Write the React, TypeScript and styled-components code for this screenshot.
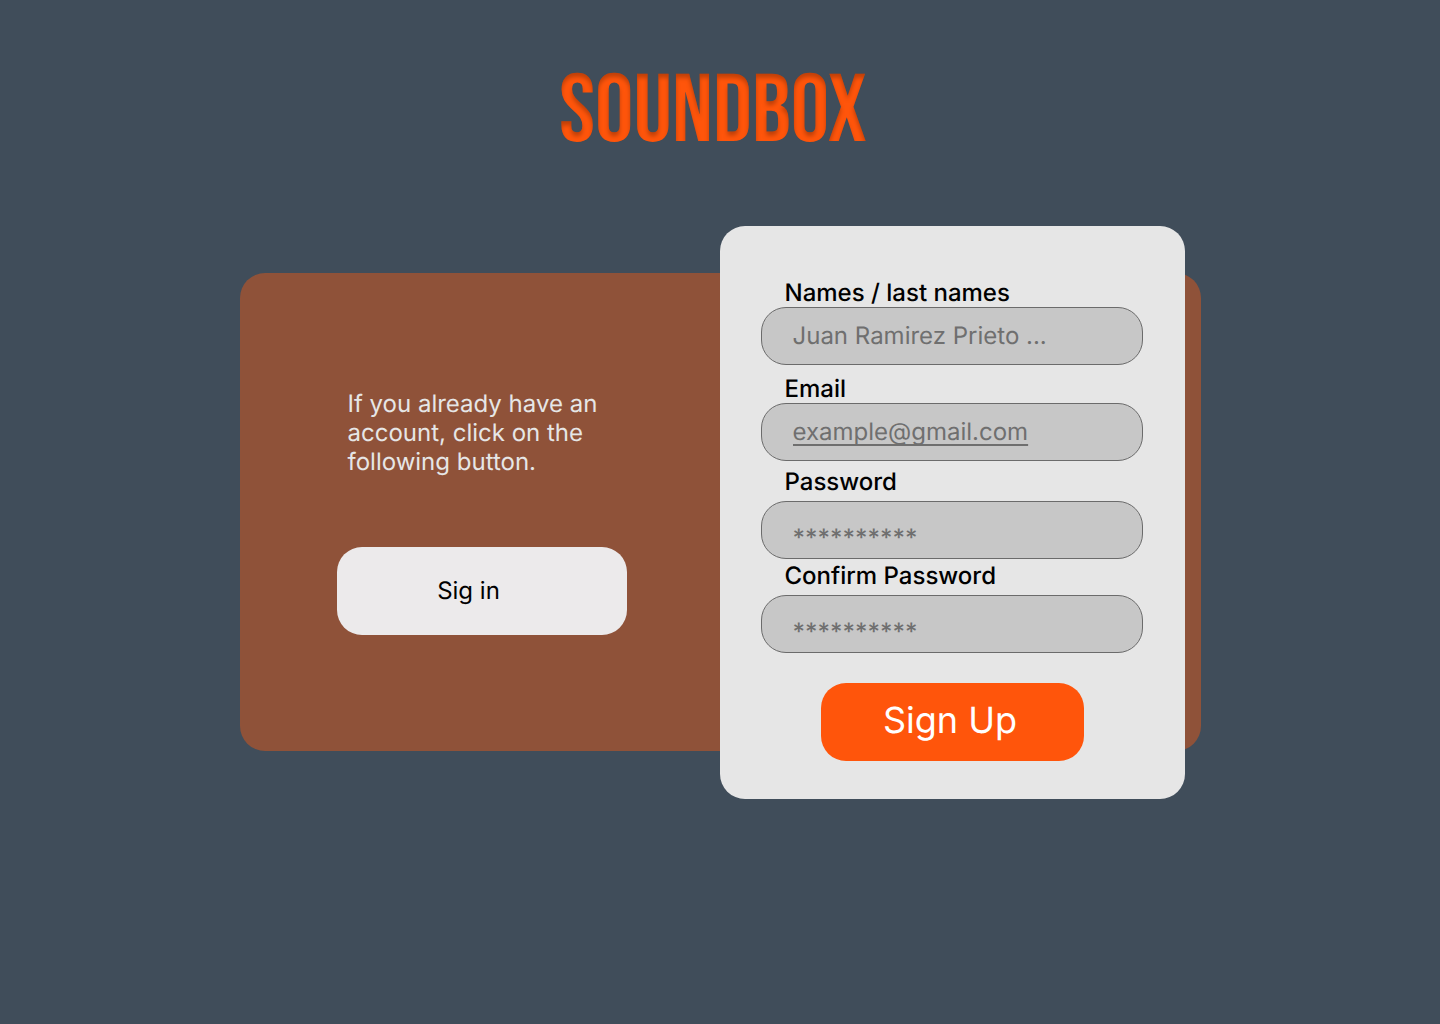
import React from "react";
import styled, { createGlobalStyle } from "styled-components";

const GlobalStyle = createGlobalStyle`
  *, *::before, *::after { box-sizing: border-box; }
  body {
    margin: 0;
    background: #404d5a;
    font-family: Inter, "Liberation Sans", sans-serif;
    font-size: 24px;
    line-height: 29px;
    font-optical-sizing: none;
    text-rendering: geometricPrecision;
  }
`;

const Page = styled.div`
  display: flex;
  flex-direction: column;
  align-items: center;
  min-height: 100vh;
  padding: 65px 24px;
`;

const Brand = styled.h1`
  margin: 0 14px 65px 0;
  color: #ff550b;
  font-family: "Bebas Neue", "Liberation Sans Narrow", "Roboto Condensed", sans-serif;
  font-size: 96px;
  font-weight: 400;
  line-height: 96px;
  filter: url(#brand-inset);
`;

const FilterDefs = styled.svg`
  display: block;
  width: 0;
  height: 0;
`;

const Stage = styled.main`
  display: grid;
  grid-template-columns: 1fr 465px 16px;
  width: 100%;
  max-width: 961px;
`;

const SignInPanel = styled.section`
  grid-area: 1 / 1 / 2 / 4;
  display: flex;
  flex-direction: column;
  align-items: flex-start;
  gap: 71px;
  margin: 47px 0 48px;
  padding: 116px 97px;
  border-radius: 25px;
  background: #8f5239;
`;

const Intro = styled.p`
  width: 270px;
  margin: 0 11px;
  color: #e6e6e6;
`;

const Button = styled.button`
  border: 0;
  border-radius: 25px;
  font-family: inherit;
  text-rendering: inherit;
  cursor: pointer;
`;

const SignInButton = styled(Button)`
  width: 290px;
  height: 88px;
  padding: 0 26px 2px 0;
  background: #eceaeb;
  color: #000;
  font-size: 24px;
`;

const SignUpButton = styled(Button)`
  height: 78px;
  margin: 30px 59px 0 60px;
  padding: 0 4px 4px 0;
  background: #ff550b;
  color: #fff;
  font-size: 36px;
`;

const SignUpCard = styled.form`
  grid-area: 1 / 2 / 2 / 3;
  display: flex;
  flex-direction: column;
  padding: 52px 42px 38px 41px;
  border-radius: 25px;
  background: #e6e6e6;
`;

const Field = styled.div<{ $before?: number; $gap?: number }>`
  display: flex;
  flex-direction: column;
  gap: ${(p) => p.$gap ?? 0}px;
  margin-top: ${(p) => p.$before ?? 0}px;
`;

const Label = styled.label`
  padding-left: 24px;
  color: #000;
  font-weight: 500;
`;

const TextBox = styled.input<{ $masked?: boolean; $underlined?: boolean }>`
  width: 100%;
  height: 58px;
  padding: ${(p) => (p.$masked ? "14px 31px 0" : "0 31px 2px")};
  border: 1px solid #6b6b6b;
  border-radius: 25px;
  background: #c7c7c7;
  color: #6f6f6f;
  font-family: inherit;
  font-size: 24px;
  font-weight: ${(p) => (p.$masked ? 500 : 400)};
  text-rendering: inherit;

  &::placeholder {
    color: #6f6f6f;
    opacity: 1;
    text-decoration: ${(p) => (p.$underlined ? "underline" : "none")};
    text-decoration-skip-ink: none;
    text-underline-offset: 4px;
  }
`;

export default function App() {
  return (
    <Page>
      <GlobalStyle />
      <FilterDefs aria-hidden="true">
        <filter id="brand-inset" x="0" y="0" width="100%" height="100%" colorInterpolationFilters="sRGB">
          <feOffset in="SourceAlpha" dy="4" result="shifted" />
          <feGaussianBlur in="shifted" stdDeviation="2" result="soft" />
          <feComposite in="SourceAlpha" in2="soft" operator="out" result="edge" />
          <feFlood floodColor="#000" floodOpacity="0.25" />
          <feComposite in2="edge" operator="in" result="shade" />
          <feMerge>
            <feMergeNode in="SourceGraphic" />
            <feMergeNode in="shade" />
          </feMerge>
        </filter>
      </FilterDefs>
      <Brand>SOUNDBOX</Brand>
      <Stage>
        <SignInPanel>
          <Intro>If you already have an account, click on the following button.</Intro>
          <SignInButton type="button">Sig in</SignInButton>
        </SignInPanel>
        <SignUpCard onSubmit={(e) => e.preventDefault()}>
          <Field>
            <Label htmlFor="names">Names / last names</Label>
            <TextBox id="names" type="text" placeholder="Juan Ramirez Prieto ..." />
          </Field>
          <Field $before={9}>
            <Label htmlFor="email">Email</Label>
            <TextBox id="email" type="email" placeholder="example@gmail.com" $underlined />
          </Field>
          <Field $before={6} $gap={5}>
            <Label htmlFor="password">Password</Label>
            <TextBox id="password" type="password" placeholder="**********" $masked />
          </Field>
          <Field $before={2} $gap={5}>
            <Label htmlFor="confirm">Confirm Password</Label>
            <TextBox id="confirm" type="password" placeholder="**********" $masked />
          </Field>
          <SignUpButton type="submit">Sign Up</SignUpButton>
        </SignUpCard>
      </Stage>
    </Page>
  );
}
